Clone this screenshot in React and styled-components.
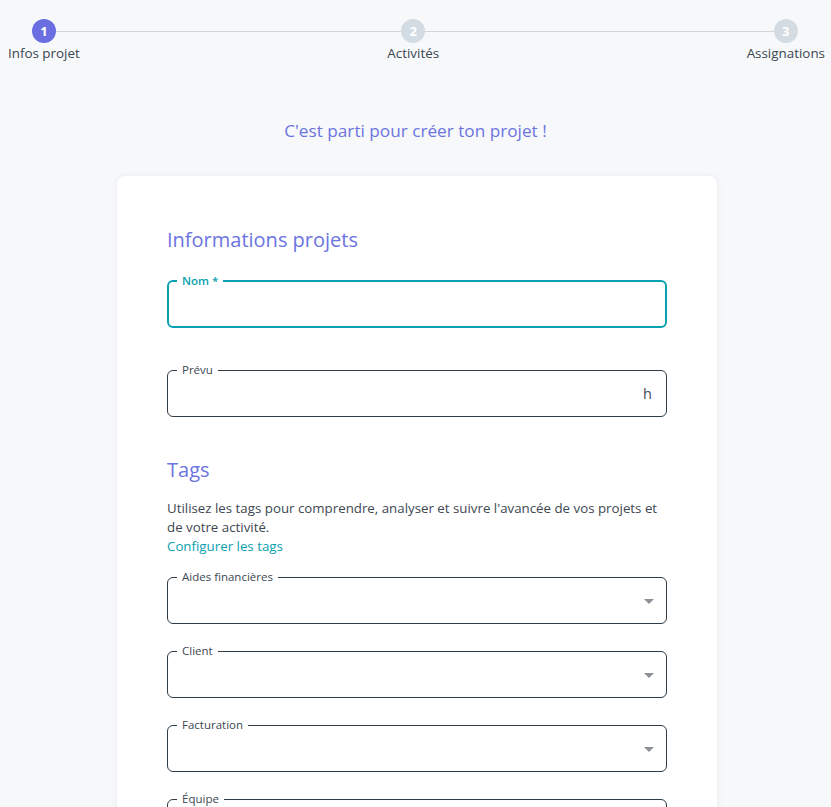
import React from 'react'
import styled, { createGlobalStyle } from 'styled-components'

const Global = createGlobalStyle`
  html, body { margin: 0; padding: 0; background: #f7f8fa; }
  body { font-family: 'Open Sans', 'Noto Sans', sans-serif; color: #3d4852; overflow: hidden; }
  * { box-sizing: border-box; }
`

const Page = styled.div`
  width: 831px;
  height: 807px;
  overflow: hidden;
`

const Stepper = styled.div`
  position: relative;
  display: flex;
  justify-content: space-between;
  padding: 19px 6px 0 8px;
  height: 64px;
`

const Line = styled.div`
  position: absolute;
  top: 31px;
  left: 43px;
  right: 47px;
  height: 1px;
  background: #cfd6dc;
`

const Step = styled.div`
  position: relative;
  display: flex;
  flex-direction: column;
  align-items: center;
  gap: 2px;
`

const Dot = styled.div`
  width: 24px;
  height: 24px;
  border-radius: 50%;
  background: ${p => (p.$active ? '#6a6ee0' : '#d3dce2')};
  color: #fff;
  font-size: 13px;
  font-weight: 700;
  display: flex;
  align-items: center;
  justify-content: center;
`

const StepLabel = styled.div`
  font-size: 13.4px;
  color: #3a4650;
  line-height: 16px;
`

const Intro = styled.h2`
  margin: 57px 0 0;
  text-align: center;
  font-size: 17.2px;
  font-weight: 400;
  color: #6b74df;
  line-height: 20px;
`

const Card = styled.div`
  width: 600px;
  margin: 35px auto 0 117px;
  background: #fff;
  border-radius: 8px;
  box-shadow: 0 0 6px rgba(30, 40, 60, 0.06);
  padding: 51px 50px 40px;
  min-height: 700px;
`

const Heading = styled.h3`
  margin: 0 0 ${p => p.$mb || 14}px;
  font-size: 20px;
  font-weight: 400;
  color: #6b74df;
  line-height: 26px;
`

const Field = styled.fieldset`
  position: relative;
  margin: 0 0 ${p => p.$mb || 27}px;
  padding: 0 12px;
  height: 53px;
  border: ${p => (p.$focus ? '2px solid #0aa1b0' : '1px solid #2f3b45')};
  border-radius: 6px;
  display: flex;
  align-items: center;
  justify-content: flex-end;
`

const Legend = styled.legend`
  margin-left: ${p => (p.$focus ? -4 : -3)}px;
  padding: 0 5px;
  font-size: 11.5px;
  line-height: 12px;
  color: ${p => (p.$focus ? '#0aa1b0' : '#3d4852')};
  font-weight: ${p => (p.$focus ? 600 : 400)};
`

const Suffix = styled.span`
  font-size: 14.5px;
  color: #3d4852;
  margin-top: -6px;
  margin-right: 2px;
`

const Caret = styled.span`
  width: 0;
  height: 0;
  border-left: 5px solid transparent;
  border-right: 5px solid transparent;
  border-top: 5px solid #8a9096;
  margin-top: -4px;
`

const Text = styled.p`
  margin: 0;
  font-size: 13.3px;
  line-height: 19px;
  color: #3d4852;
`

const Link = styled.a`
  display: block;
  font-size: 13.3px;
  line-height: 19px;
  color: #0aa1b0;
  text-decoration: none;
  margin-bottom: 15px;
`

const steps = ['Infos projet', 'Activités', 'Assignations']
const tags = ['Aides financières', 'Client', 'Facturation', 'Équipe']

export default function App() {
  return (
    <Page>
      <Global />
      <Stepper>
        <Line />
        {steps.map((s, i) => (
          <Step key={s}>
            <Dot $active={i === 0}>{i + 1}</Dot>
            <StepLabel>{s}</StepLabel>
          </Step>
        ))}
      </Stepper>
      <Intro>C'est parti pour créer ton projet !</Intro>
      <Card>
        <Heading $mb={22}>Informations projets</Heading>
        <Field $focus $mb={36}>
          <Legend $focus>Nom *</Legend>
        </Field>
        <Field $mb={40}>
          <Legend>Prévu</Legend>
          <Suffix>h</Suffix>
        </Field>
        <Heading $mb={16}>Tags</Heading>
        <Text>
          Utilisez les tags pour comprendre, analyser et suivre l'avancée de vos projets et de votre activité.
        </Text>
        <Link href="#">Configurer les tags</Link>
        {tags.map(t => (
          <Field key={t} $mb={21}>
            <Legend>{t}</Legend>
            <Caret />
          </Field>
        ))}
      </Card>
    </Page>
  )
}
